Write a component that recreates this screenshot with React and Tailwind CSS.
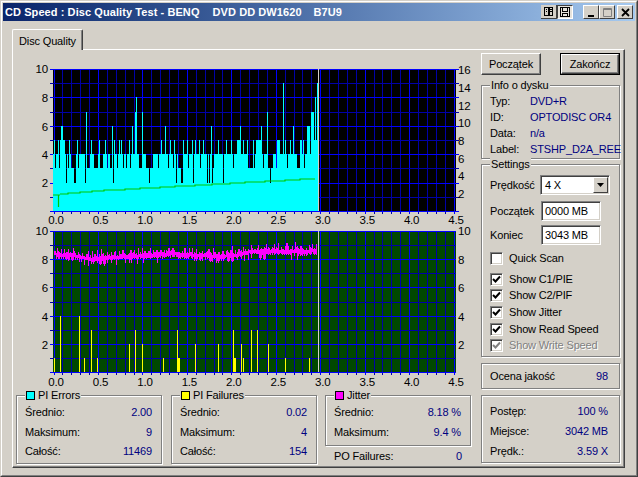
const range = (a, b) => Array.from({ length: b - a + 1 }, (_, i) => a + i);

// value 4 everywhere, except these pixels
const spikes = {
  54: 5, 58: 5, 60: 5, 61: 6, 62: 6, 63: 5, 64: 5, 69: 5, 77: 5, 86: 7, 91: 5, 99: 5, 105: 5, 112: 6, 114: 5, 119: 5, 121: 5,
  129: 5, 132: 6, 135: 7, 136: 8, 141: 6, 142: 7, 161: 5, 165: 6, 170: 5, 174: 5, 178: 5, 183: 5, 187: 5, 192: 5, 195: 5,
  199: 5, 200: 6, 203: 5, 211: 6, 218: 5, 226: 5, 231: 5, 233: 6, 237: 5, 238: 5, 239: 5, 240: 6, 243: 5, 247: 5, 253: 5,
  256: 5, 257: 5, 258: 5, 259: 5, 260: 5, 261: 6, 263: 5, 267: 7, 268: 6, 272: 7, 277: 5, 278: 5, 279: 5, 283: 9, 285: 5,
  290: 5, 293: 6, 297: 6, 299: 5, 300: 5, 301: 5, 303: 5, 307: 6, 308: 6, 309: 6, 311: 7, 312: 7, 313: 7, 314: 5, 315: 8, 316: 5, 317: 9,
};
const dips3 = [55, 59, 68, 71, 72, 73, 78, 87, 88, 89, 94, 95, 96, 97, 100, 101, 102, 107, 110, 111, 117, 123, 126, 130, 139, 140, 141, 146, 147, 148, 150, 151, 152, 158, 168, 173, 178, 179, 180, 188, 200, 209, 212, 213, 223, 233, 248, 249, 250, 251, 252, 254, 263, 268, 269, 270, 271, 272, 276, 287, 297, 298, 299, 304];
const dips2 = [66, 74, 75, 85, 113, 149, 176, 181, 182, 193, 207, 209, 212, 223, 270];

const piY = (v) => 211 - Math.round(v * 14.2);
const poY = (v) => 372 - Math.round(v * 14.1);

const piBars = range(53, 317).map((x) => {
  let v = spikes[x] ?? 4;
  if (dips3.includes(x)) v = 3;
  if (dips2.includes(x)) v = 2;
  return { x, v };
});

const yellowBars = [[54, 1], [60, 4], [79, 4], [84, 1], [91, 3], [97, 1], [129, 2], [135, 3], [142, 2], [163, 1], [177, 3], [178, 1], [179, 1], [195, 2], [218, 2], [233, 3], [234, 1], [235, 1], [241, 2], [243, 1], [251, 3], [257, 3], [268, 2], [285, 1], [309, 1]];

const jitterBase = [[54, 253], [60, 255], [72, 255], [90, 259], [110, 257], [130, 256], [160, 254], [170, 253], [200, 255], [215, 256], [235, 255], [250, 251], [265, 251], [280, 251], [300, 251], [316, 250]];
const baseAt = (x) => {
  for (let i = 1; i < jitterBase.length; i++) {
    const [x0, y0] = jitterBase[i - 1];
    const [x1, y1] = jitterBase[i];
    if (x <= x1) return y0 + ((y1 - y0) * (x - x0)) / (x1 - x0);
  }
  return 250;
};
let seed = 41;
const rnd = () => {
  seed = (seed * 1103 + 12345) % 65536;
  return seed / 65536;
};
const jitter = range(54, 316).map((x) => {
  const up = Math.round(rnd() * rnd() * 9);
  const down = Math.round(rnd() * rnd() * 8);
  return { x, y: Math.round(baseAt(x)) - 1 - up, h: 3 + up + down };
});

const Grid = ({ top, bottom, rowH, bg, rightTicks }) => {
  const lines = [];
  range(0, 45).forEach((i) => {
    const x = Math.round(53.5 + i * 8.89);
    lines.push(<rect key={`v${i}`} x={x} y={top} width="1" height={bottom - top + 3} fill={i % 5 === 0 ? "#0000ff" : "#0000a8"} />);
  });
  range(0, 10).forEach((i) => {
    const y = Math.round(bottom - i * rowH);
    lines.push(<rect key={`h${i}`} x={50} y={y} width={rightTicks ? 409 : 406} height="1" fill={i % 2 === 0 ? "#0000ff" : "#0000a8"} />);
  });
  return (
    <>
      <rect x="53" y={top} width="403" height={bottom - top} fill={bg} />
      {lines}
    </>
  );
};

const AxisLabels = ({ y }) =>
  ["0.0", "0.5", "1.0", "1.5", "2.0", "2.5", "3.0", "3.5", "4.0", "4.5"].map((t, i) => (
    <text key={t} x={56 + i * 44.45} y={y} textAnchor="middle" fill="#000">
      {t}
    </text>
  ));

const Charts = () => (
  <svg viewBox="13 50 468 340" width="468" height="340" className="block text-[11.5px] tracking-[-0.2px]">
    <g shapeRendering="crispEdges">
      <Grid top={69} bottom={211} rowH={14.2} bg="#000" rightTicks />
      {piBars.map(({ x, v }) => (
        <rect key={x} x={x} y={piY(v)} width="1" height={211 - piY(v)} fill="#00ffff" />
      ))}
      <rect x="318" y="69" width="1" height="142" fill="#d4d0c8" />

      <Grid top={231} bottom={372} rowH={14.1} bg="#004800" />
      {yellowBars.map(([x, v]) => (
        <rect key={x} x={x} y={poY(v)} width="1" height={372 - poY(v)} fill="#ffff00" />
      ))}
      {jitter.map(({ x, y, h }) => (
        <rect key={x} x={x} y={y} width="1" height={h} fill="#ff00ff" />
      ))}
      <rect x="318" y="231" width="1" height="141" fill="#d4d0c8" />
    </g>

    {/* read speed */}
    <path d="M53 195 H60 M58.5 195 V207 M60 194 H68 V193 H80 V192 H92 V191 H104 V190 H125 V189 H140 V188 H160 V187 H175 V186 H195 V185 H212 V184 H230 V183 H245 V182 H265 V181 H285 V180 H300 V179 H315" fill="none" stroke="#00c800" strokeWidth="1.2" />

    {[["10", 73], ["8", 102], ["6", 131], ["4", 159], ["2", 187]].map(([t, y]) => (
      <text key={t} x="48" y={y} textAnchor="end" fill="#000">{t}</text>
    ))}
    {[["16", 74], ["14", 92], ["12", 110], ["10", 127], ["8", 145], ["6", 163], ["4", 180], ["2", 198]].map(([t, y]) => (
      <text key={t} x="458" y={y} fill="#000">{t}</text>
    ))}
    <AxisLabels y={224} />

    {[["10", 235], ["8", 264], ["6", 292], ["4", 321], ["2", 349]].map(([t, y]) => (
      <text key={t} x="48" y={y} textAnchor="end" fill="#000">{t}</text>
    ))}
    {[["10", 235], ["8", 264], ["6", 292], ["4", 321], ["2", 349]].map(([t, y]) => (
      <text key={t} x="458" y={y} fill="#000">{t}</text>
    ))}
    <AxisLabels y={386} />
  </svg>
);

const Group = ({ title, swatch, className = "", children }) => (
  <div className={`relative border border-[#808080] shadow-[1px_1px_0_#fff,inset_1px_1px_0_#fff] ${className}`}>
    {title && (
      <div className="absolute -top-[7px] left-[8px] flex items-center gap-[3px] bg-[#d4d0c8] px-[1px] h-[13px] leading-[13px]">
        {swatch && <span className={`w-[9px] h-[9px] border border-black ${swatch}`} />}
        <span>{title}</span>
      </div>
    )}
    {children}
  </div>
);

const Row = ({ label, value, className = "h-[20px]" }) => (
  <div className={`flex items-center justify-between ${className}`}>
    <span>{label}</span>
    <span className="text-[#000080]">{value}</span>
  </div>
);

const Stat = ({ title, swatch, rows, className }) => (
  <Group title={title} swatch={swatch} className={`w-[146px] pl-[8px] pr-[9px] pt-[6px] ${className}`}>
    {rows.map(([l, v], i) => (
      <Row key={l} label={l} value={v} className={i === 2 ? "h-[18px]" : "h-[20px]"} />
    ))}
  </Group>
);

const InfoRow = ({ label, value }) => (
  <div className="flex items-center h-[16px] whitespace-nowrap">
    <span className="w-[40px] shrink-0">{label}</span>
    <span className="text-[#000080]">{value}</span>
  </div>
);

const Sunken = ({ className = "", children }) => (
  <div className={`border border-[#808080] border-r-white border-b-white shadow-[inset_1px_1px_0_#404040,inset_-1px_-1px_0_#d4d0c8] bg-white ${className}`}>
    {children}
  </div>
);

const Check = ({ label, checked, disabled, className = "" }) => (
  <div className={`flex items-center gap-[6px] h-[13px] ${className}`}>
    <Sunken className={`w-[13px] h-[13px] shrink-0 flex items-center justify-center ${disabled ? "bg-[#d4d0c8]" : ""}`}>
      {checked && (
        <svg viewBox="0 0 9 9" className="w-[9px] h-[9px]">
          <path d="M1 4 L3.5 6.5 L8 1.5" fill="none" stroke={disabled ? "#808080" : "#000"} strokeWidth="2" />
        </svg>
      )}
    </Sunken>
    <span className={disabled ? "text-[#808080] [text-shadow:1px_1px_0_#fff]" : ""}>{label}</span>
  </div>
);

const Button = ({ children, isDefault }) => (
  <div className={`w-[60px] h-[22px] flex items-center justify-center ${isDefault ? "border border-black" : ""}`}>
    <div className="w-full h-full flex items-center justify-center border border-white border-r-[#404040] border-b-[#404040] shadow-[inset_-1px_-1px_0_#808080]">
      {children}
    </div>
  </div>
);

const Settings = () => (
  <Group title="Settings" className="h-[193px] mt-[5px] px-[8px]">
    <div className="flex items-center justify-between h-[20px] mt-[10px] mr-[1px]">
      <span>Prędkość</span>
      <Sunken className="w-[70px] h-[20px] flex items-center justify-between pl-[4px] pr-[1px]">
        <span>4 X</span>
        <div className="w-[15px] h-[16px] bg-[#d4d0c8] border border-white border-r-[#404040] border-b-[#404040] flex items-center justify-center">
          <svg viewBox="0 0 7 4" className="w-[7px] h-[4px]"><path d="M0 0 H7 L3.5 4 Z" fill="#000" /></svg>
        </div>
      </Sunken>
    </div>
    <div className="flex items-center h-[20px] mt-[6px]">
      <span className="w-[51px]">Początek</span>
      <Sunken className="w-[60px] h-[20px] flex items-center pl-[3px]">0000 MB</Sunken>
    </div>
    <div className="flex items-center h-[20px] mt-[4px]">
      <span className="w-[51px]">Koniec</span>
      <Sunken className="w-[60px] h-[20px] flex items-center pl-[3px]">3043 MB</Sunken>
    </div>
    <Check label="Quick Scan" className="mt-[7px]" />
    <Check label="Show C1/PIE" checked className="mt-[8px]" />
    <Check label="Show C2/PIF" checked className="mt-[3px]" />
    <Check label="Show Jitter" checked className="mt-[4px]" />
    <Check label="Show Read Speed" checked className="mt-[4px]" />
    <Check label="Show Write Speed" checked disabled className="mt-[3px]" />
  </Group>
);

const TitleIcons = () => (
  <div className="flex items-center h-full">
    <div className="w-[16px] h-[14px] bg-[#d4d0c8] border-r border-b border-[#404040] flex items-center justify-center">
      <svg viewBox="0 0 9 9" className="w-[9px] h-[9px]" shapeRendering="crispEdges">
        <path d="M0.5 0.5 H4 V8.5 H0.5 Z M5 0.5 H8.5 V8.5 H5 Z M1.5 2.5 H3 M1.5 4.5 H3 M6 2.5 H7.5 M6 4.5 H7.5" fill="none" stroke="#000" />
      </svg>
    </div>
    <div className="w-[16px] h-[14px] bg-[#e6e3dc] border border-[#404040] border-r-white border-b-white flex items-center justify-center">
      <svg viewBox="0 0 10 10" className="w-[10px] h-[10px]" shapeRendering="crispEdges">
        <path d="M0.5 0.5 H9.5 V9.5 H0.5 Z M2.5 0.5 V4.5 H7.5 V0.5 M2.5 9.5 V6.5 H7.5 V9.5" fill="none" stroke="#000" />
      </svg>
    </div>
    <div className="w-[10px]" />
    {[
      <path key="min" d="M3 8 H9 V10 H3 Z" fill="#000" />,
      <path key="max" d="M2.5 1.5 H10.5 V9.5 H2.5 Z M2.5 2.5 H10.5" fill="none" stroke="#808080" />,
      <path key="x" d="M3 2 L10 9 M10 2 L3 9" fill="none" stroke="#000" strokeWidth="1.8" />,
    ].map((icon, i) => (
      <div key={i} className={`w-[16px] h-[14px] bg-[#d4d0c8] border border-white border-r-[#404040] border-b-[#404040] flex items-center justify-center ${i === 2 ? "ml-[2px]" : ""}`}>
        <svg viewBox="0 0 13 11" className="w-[13px] h-[11px]">{icon}</svg>
      </div>
    ))}
  </div>
);

export default function App() {
  return (
    <div className="w-[638px] h-[477px] overflow-hidden bg-[#d4d0c8] border border-[#d4d0c8] border-r-[#404040] border-b-[#404040] font-['Liberation_Sans',Arial,sans-serif] text-[11px] tracking-[-0.15px] leading-none text-black">
      <div className="h-full border border-white border-r-[#808080] border-b-[#808080] pt-[1px] px-[1px]">
        <div className="flex items-center justify-between h-[18px] pl-[2px] pr-[2px] bg-gradient-to-r from-[#0a246a] to-[#a6caf0]">
          <span className="font-bold text-white whitespace-pre tracking-[0.08px]">
            CD Speed : Disc Quality Test - BENQ
            <span className="ml-[13px]">DVD DD DW1620</span>
            <span className="ml-[12px]">B7U9</span>
          </span>
          <TitleIcons />
        </div>

        <div className="pl-[9px] pt-[8px]">
          <div className="relative -mb-[1px] w-[71px] h-[21px] pt-[3px] flex items-center justify-center bg-[#d4d0c8] border border-white border-b-0 border-r-[#404040] shadow-[inset_-1px_0_0_#808080] rounded-t-[2px]">
            Disc Quality
          </div>
          <div className="flex w-[613px] h-[419px] border border-white border-r-[#404040] border-b-[#404040] shadow-[inset_-1px_-1px_0_#808080]">
            <div className="w-[468px] shrink-0">
              <Charts />
              <div className="flex items-start pl-[3px] mt-[5px]">
                <Stat title="PI Errors" swatch="bg-[#00ffff]" className="h-[69px] mr-[9px]" rows={[["Średnio:", "2.00"], ["Maksimum:", "9"], ["Całość:", "11469"]]} />
                <Stat title="PI Failures" swatch="bg-[#ffff00]" className="h-[69px] mr-[8px]" rows={[["Średnio:", "0.02"], ["Maksimum:", "4"], ["Całość:", "154"]]} />
                <div className="w-[146px]">
                  <Stat title="Jitter" swatch="bg-[#ff00ff]" className="h-[51px]" rows={[["Średnio:", "8.18 %"], ["Maksimum:", "9.4 %"]]} />
                  <div className="pl-[9px] pr-[9px] mt-[3px]">
                    <Row label="PO Failures:" value="0" className="h-[14px]" />
                  </div>
                </div>
              </div>
            </div>

            <div className="w-[139px] shrink-0 pt-[3px]">
              <div className="flex justify-between">
                <Button>Początek</Button>
                <Button isDefault>Zakończ</Button>
              </div>
              <Group title="Info o dysku" className="h-[74px] mt-[10px] pl-[8px] pr-[1px] pt-[7px]">
                <InfoRow label="Typ:" value="DVD+R" />
                <InfoRow label="ID:" value="OPTODISC OR4" />
                <InfoRow label="Data:" value="n/a" />
                <InfoRow label="Label:" value="STSHP_D2A_REE" />
              </Group>
              <Settings />
              <Group className="h-[26px] mt-[6px] pl-[8px] pr-[11px] pt-[1px] flex items-center">
                <Row label="Ocena jakość" value="98" className="h-[14px] w-full" />
              </Group>
              <Group className="h-[68px] mt-[6px] pl-[8px] pr-[11px] pt-[5px]">
                <Row label="Postęp:" value="100 %" className="h-[20px]" />
                <Row label="Miejsce:" value="3042 MB" className="h-[21px]" />
                <Row label="Prędk.:" value="3.59 X" className="h-[18px]" />
              </Group>
            </div>
          </div>
        </div>
      </div>
    </div>
  );
}
